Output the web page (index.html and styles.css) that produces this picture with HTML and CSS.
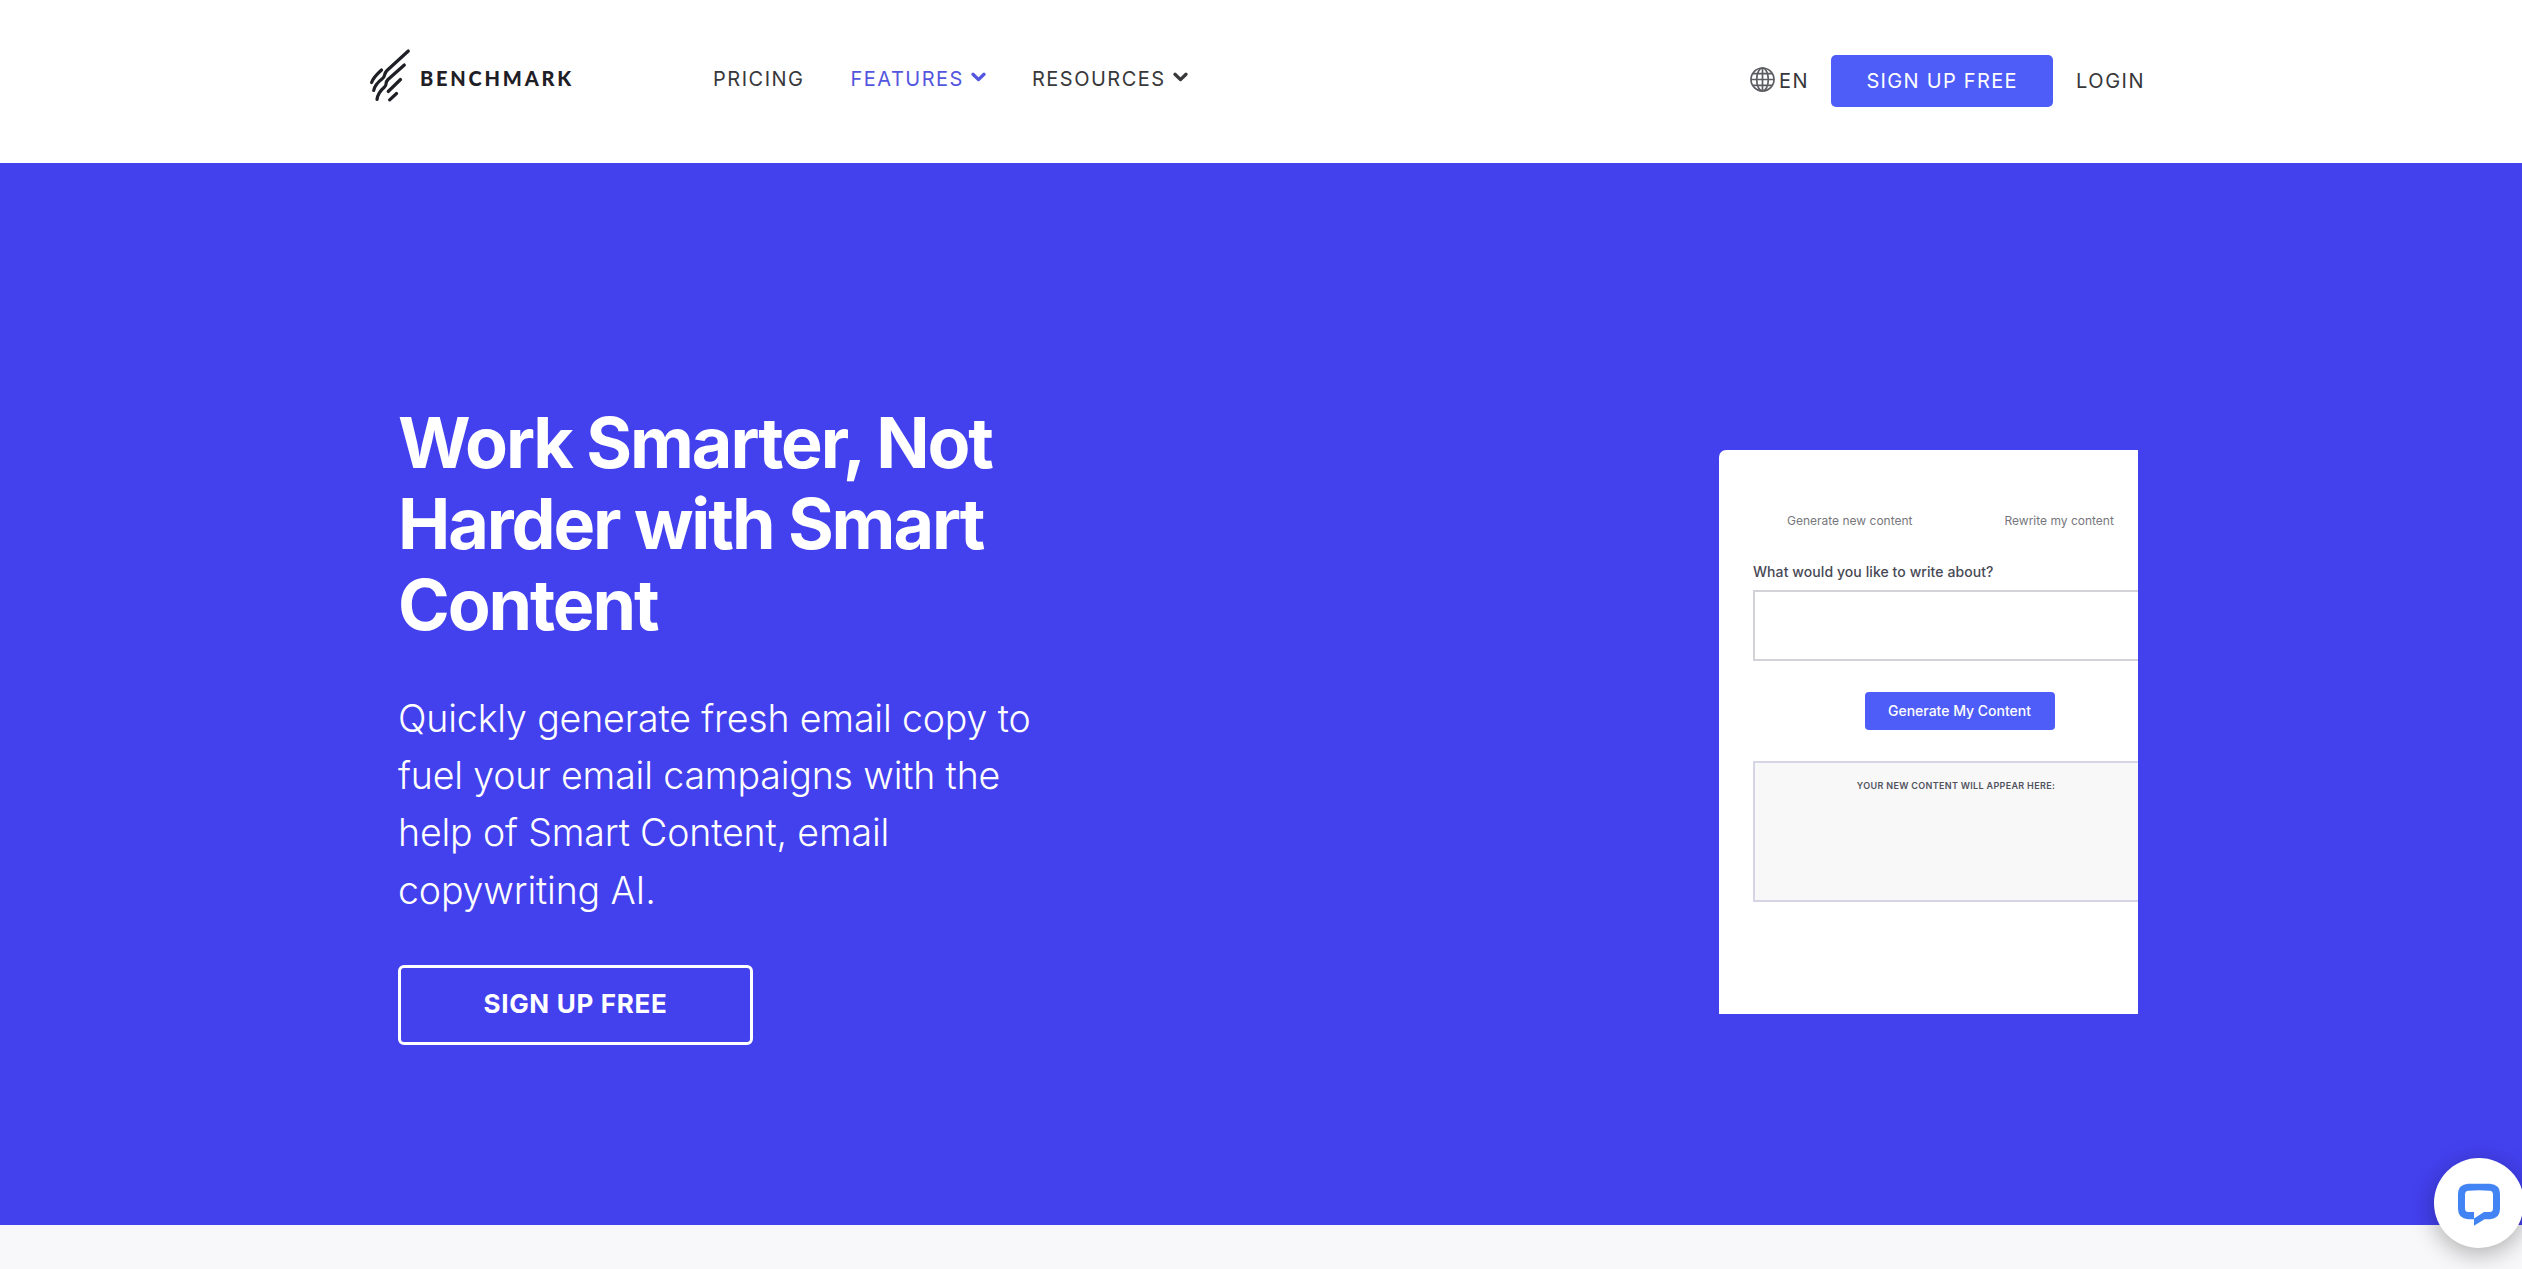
FILE: index.html
```
<!DOCTYPE html>
<html lang="en">
<head>
  <meta charset="UTF-8" />
  <meta name="viewport" content="width=device-width, initial-scale=1.0" />
  <title>Smart Content - Benchmark</title>
  <link rel="stylesheet" href="styles.css">
</head>
<body>
  <header>
    <a class="logo" href="#">
      <svg width="42" height="54" viewBox="0 0 42 54" fill="none" stroke="#1f2026" stroke-width="3.2" stroke-linecap="round" stroke-linejoin="round">
        <path d="M2.600 34.500C4 30.500 7.500 26.500 12.500 22"/>
        <path d="M39.300 3L18 22.500C14.500 26 16.500 28.500 13.500 30.500C9 34 5.500 38 4.700 42.500"/>
        <path d="M35.300 17L19 31.500C15.500 35 18.500 36.500 15.500 39C11.500 42.500 8.500 46 8 51.500"/>
        <path d="M31.500 31.500L19.200 43.500"/>
        <path d="M27.500 45.500L20.700 51.800"/>
      </svg>
      <span>BENCHMARK</span>
    </a>
    <nav>
      <a href="#">PRICING</a>
      <a class="active" href="#">FEATURES
        <svg width="15" height="10" viewBox="0 0 15 10"><path d="M2 2.300L7.500 7.600L13 2.300" fill="none" stroke="currentColor" stroke-width="3.300" stroke-linecap="round" stroke-linejoin="round"/></svg>
      </a>
      <a href="#">RESOURCES
        <svg width="15" height="10" viewBox="0 0 15 10"><path d="M2 2.300L7.500 7.600L13 2.300" fill="none" stroke="currentColor" stroke-width="3.300" stroke-linecap="round" stroke-linejoin="round"/></svg>
      </a>
    </nav>
    <div class="account">
      <a class="lang" href="#">
        <svg width="25" height="25" viewBox="0 0 25 25" fill="none" stroke="#5c5d62" stroke-width="1.700">
          <circle cx="12.500" cy="12.500" r="11.500"/>
          <ellipse cx="12.500" cy="12.500" rx="5.800" ry="11.500"/>
          <path d="M12.500 1V24M1 12.500H24M3 6.600H22M3 18.400H22"/>
        </svg>
        <span>EN</span>
      </a>
      <a class="signup" href="#">SIGN UP FREE</a>
      <a href="#">LOGIN</a>
    </div>
  </header>

  <section class="hero">
    <div class="hero-text">
      <h1>Work Smarter, Not Harder with Smart Content</h1>
      <p>Quickly generate fresh email copy to fuel your email campaigns with the help of Smart Content, email copywriting AI.</p>
      <a class="hero-button" href="#">SIGN UP FREE</a>
    </div>
    <div class="preview">
      <div class="panel">
        <div class="tabs">
          <span>Generate new content</span>
          <span>Rewrite my content</span>
        </div>
        <div class="question">What would you like to write about?</div>
        <div class="input-box"></div>
        <div class="generate">Generate My Content</div>
        <div class="result-box">YOUR NEW CONTENT WILL APPEAR HERE:</div>
      </div>
    </div>
  </section>

  <div class="chat">
    <svg width="90" height="90" viewBox="0 0 90 90">
      <path fill="#4384f5" fill-rule="evenodd" d="M34 25.700H56Q66 26.500 66 36V51Q66 60.500 56 61.200H50.500L40 67.800V61.200H34Q24 60.500 24 51V36Q24 26.500 34 25.700ZM34.500 32.800Q31 33 31 36.500V50.500Q31 54 34.500 54H40V60.500L50 54H55.500Q59 54 59 50.500V36.500Q59 33 55.500 32.800Q45 31.900 34.500 32.800Z"/>
    </svg>
  </div>
</body>
</html>
```

FILE: styles.css
```
body {
  font-family: Inter, "Liberation Sans", sans-serif;
  margin: 0;
  background: #f8f8fa;
  height: 1269px;
  overflow: hidden;
}
a {
  color: #38383b;
  text-decoration: none;
}
header {
  display: flex;
  align-items: center;
  box-sizing: border-box;
  height: 163px;
  padding: 0 377px 1px 369px;
  background: #fff;
  font-size: 20px;
  line-height: 24px;
  letter-spacing: 1.5px;
}
.logo {
  display: flex;
  align-items: center;
  width: 344px;
  margin-bottom: 12px;
}
.logo span {
  font-family: Lato, sans-serif;
  font-weight: 900;
  letter-spacing: 2.8px;
  margin: 5px 0 0 9px;
  color: #1f2026;
}
nav {
  display: flex;
  gap: 46px;
  margin-bottom: 5px;
}
nav a {
  display: flex;
  align-items: center;
}
nav svg {
  margin: 0 0 3px 7px;
}
nav .active {
  color: #5356de;
}
.account {
  display: flex;
  align-items: center;
  margin-left: auto;
}
.lang {
  display: flex;
  align-items: center;
}
.lang svg {
  margin: 0 4px 4px 0;
}
.signup {
  background: #4e5df8;
  color: #fff;
  border-radius: 5px;
  line-height: 52px;
  width: 222px;
  text-align: center;
  letter-spacing: 1.3px;
  margin: 0 23px 0 22px;
}
.hero {
  display: flex;
  justify-content: space-between;
  box-sizing: border-box;
  height: 1062px;
  padding: 239px 384px 0 398px;
  background: #4340ee;
}
.hero-text {
  width: 650px;
  color: #fff;
}
h1 {
  margin: 0 0 45px;
  font-size: 70px;
  line-height: 81px;
  font-weight: 700;
  letter-spacing: -2.1px;
}
.hero-text p {
  margin: 0 0 46px;
  font-size: 37.5px;
  line-height: 57.2px;
  font-weight: 300;
  letter-spacing: -0.15px;
}
.hero-button {
  display: block;
  box-sizing: border-box;
  width: 355px;
  height: 80px;
  border: 3px solid #fff;
  border-radius: 6px;
  color: #fff;
  font-size: 26px;
  line-height: 72px;
  font-weight: 700;
  letter-spacing: 0.7px;
  text-align: center;
}
.preview {
  width: 419px;
  height: 564px;
  margin-top: 48px;
  background: #fff;
  border-radius: 7px 0 0 0;
  overflow: hidden;
}
.panel {
  width: 413px;
  padding: 63px 34px 0;
  color: #51525e;
}
.tabs {
  display: flex;
  gap: 92px;
  padding-left: 34px;
  font-size: 12px;
  line-height: 16px;
  color: #77777d;
}
.question {
  margin: 33px 0 8px;
  font-size: 14px;
  line-height: 20px;
  font-weight: 500;
  letter-spacing: 0.08px;
  color: #484955;
}
.input-box {
  box-sizing: border-box;
  height: 71px;
  border: 2px solid #d2d2d8;
}
.generate {
  width: 190px;
  margin: 31px auto;
  border-radius: 4px;
  background: #4e5df8;
  color: #fff;
  font-size: 14px;
  line-height: 38px;
  font-weight: 500;
  text-align: center;
}
.result-box {
  box-sizing: border-box;
  height: 141px;
  padding: 17px 7px 0 0;
  border: 2px solid #d5d5e6;
  background: #f8f8f9;
  font-size: 9px;
  line-height: 12px;
  font-weight: 600;
  letter-spacing: 0.33px;
  text-align: center;
}
.chat {
  position: fixed;
  right: -2px;
  bottom: 21px;
  width: 90px;
  height: 90px;
  border-radius: 50%;
  background: #fff;
  box-shadow: 0 6px 24px rgba(0,0,0,0.3);
}
```
